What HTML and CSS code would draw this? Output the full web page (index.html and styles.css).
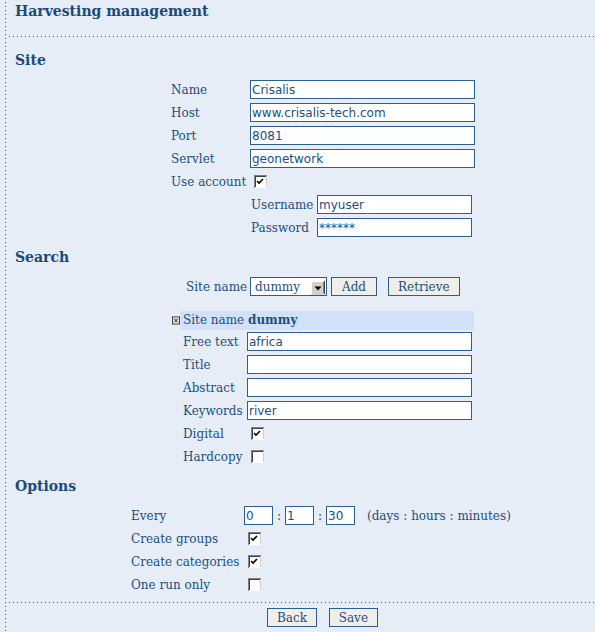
FILE: index.html
```html
<!DOCTYPE html>
<html>
<head>
<meta charset="utf-8">
<title>Harvesting management</title>
<link rel="stylesheet" href="styles.css">
</head>
<body>
<div class="page">
  <div class="title">Harvesting management</div>
  <div class="sep"></div>

  <h2 class="section">Site</h2>
  <div class="center">
    <div class="block site">
      <div class="row"><span class="lbl c80">Name</span><input class="txt w225" type="text" value="Crisalis"></div>
      <div class="row"><span class="lbl c80">Host</span><input class="txt w225" type="text" value="www.crisalis-tech.com"></div>
      <div class="row"><span class="lbl c80">Port</span><input class="txt w225" type="text" value="8081"></div>
      <div class="row"><span class="lbl c80">Servlet</span><input class="txt w225" type="text" value="geonetwork"></div>
      <div class="row"><span class="lbl c80">Use account</span>
        <span class="cb"><svg width="13" height="13" viewBox="0 0 13 13"><rect width="13" height="13" fill="#fff"/><path d="M0 0h13v1H1v12H0z" fill="#808080"/><path d="M1 1h11v1H2v10H1z" fill="#404040"/><path d="M1 12h12V1h-1v11H1z" fill="#d4d0c8"/><rect x="2" y="2" width="9" height="9" fill="#fff"/><path d="M3 6l2 2 4-4" fill="none" stroke="#000" stroke-width="1.6"/></svg></span>
      </div>
      <div class="row"><span class="c80"></span><span class="lbl c67">Username</span><input class="txt w155" type="text" value="myuser"></div>
      <div class="row"><span class="c80"></span><span class="lbl c67">Password</span><input class="txt w155" type="text" value="******"></div>
    </div>
  </div>

  <h2 class="section">Search</h2>
  <div class="center">
    <div class="block search-bar">
      <div class="row"><span class="lbl c64">Site name</span>
        <div class="select"><span class="select-val">dummy</span><span class="drop"><svg width="14" height="14" viewBox="0 0 14 14"><rect width="14" height="14" fill="#d4d0c8"/><path d="M0 0h13v1H1v12H0z" fill="#fff"/><path d="M0 13h14V0h-1v13H0z" fill="#404040"/><path d="M1 12h12V1h-1v11H1z" fill="#808080"/><path d="M3.5 5.5h7l-3.5 4z" fill="#000"/></svg></span></div>
        <button class="btn add" type="button">Add</button>
        <button class="btn retrieve" type="button">Retrieve</button>
      </div>
    </div>
    <div class="block search-form">
      <div class="head-row"><span class="icon-col"><svg width="9" height="9" viewBox="0 0 9 9"><rect x="0.5" y="0.5" width="8" height="8" fill="#e8e8e8" stroke="#333"/><path d="M2.5 2.5l4 4M6.5 2.5l-4 4" stroke="#000" stroke-width="1"/></svg></span><span class="head">Site name <b>dummy</b></span></div>
      <div class="row"><span class="c9"></span><span class="lbl c67 pl3">Free text</span><input class="txt w225" type="text" value="africa"></div>
      <div class="row"><span class="c9"></span><span class="lbl c67 pl3">Title</span><input class="txt w225" type="text" value=""></div>
      <div class="row"><span class="c9"></span><span class="lbl c67 pl3">Abstract</span><input class="txt w225" type="text" value=""></div>
      <div class="row"><span class="c9"></span><span class="lbl c67 pl3">Keywords</span><input class="txt w225" type="text" value="river"></div>
      <div class="row"><span class="c9"></span><span class="lbl c67 pl3">Digital</span>
        <span class="cb"><svg width="13" height="13" viewBox="0 0 13 13"><rect width="13" height="13" fill="#fff"/><path d="M0 0h13v1H1v12H0z" fill="#808080"/><path d="M1 1h11v1H2v10H1z" fill="#404040"/><path d="M1 12h12V1h-1v11H1z" fill="#d4d0c8"/><rect x="2" y="2" width="9" height="9" fill="#fff"/><path d="M3 6l2 2 4-4" fill="none" stroke="#000" stroke-width="1.6"/></svg></span>
      </div>
      <div class="row"><span class="c9"></span><span class="lbl c67 pl3">Hardcopy</span>
        <span class="cb"><svg width="13" height="13" viewBox="0 0 13 13"><rect width="13" height="13" fill="#fff"/><path d="M0 0h13v1H1v12H0z" fill="#808080"/><path d="M1 1h11v1H2v10H1z" fill="#404040"/><path d="M1 12h12V1h-1v11H1z" fill="#d4d0c8"/><rect x="2" y="2" width="9" height="9" fill="#fff"/></svg></span>
      </div>
    </div>
  </div>

  <h2 class="section">Options</h2>
  <div class="center">
    <div class="block options">
      <div class="row"><span class="lbl c113">Every</span>
        <input class="txt w29" type="text" value="0"><span class="colon">:</span><input class="txt w29" type="text" value="1"><span class="colon">:</span><input class="txt w29" type="text" value="30"><span class="units">(days : hours : minutes)</span>
      </div>
      <div class="row"><span class="lbl c113">Create groups</span>
        <span class="cb"><svg width="13" height="13" viewBox="0 0 13 13"><rect width="13" height="13" fill="#fff"/><path d="M0 0h13v1H1v12H0z" fill="#808080"/><path d="M1 1h11v1H2v10H1z" fill="#404040"/><path d="M1 12h12V1h-1v11H1z" fill="#d4d0c8"/><rect x="2" y="2" width="9" height="9" fill="#fff"/><path d="M3 6l2 2 4-4" fill="none" stroke="#000" stroke-width="1.6"/></svg></span>
      </div>
      <div class="row"><span class="lbl c113">Create categories</span>
        <span class="cb"><svg width="13" height="13" viewBox="0 0 13 13"><rect width="13" height="13" fill="#fff"/><path d="M0 0h13v1H1v12H0z" fill="#808080"/><path d="M1 1h11v1H2v10H1z" fill="#404040"/><path d="M1 12h12V1h-1v11H1z" fill="#d4d0c8"/><rect x="2" y="2" width="9" height="9" fill="#fff"/><path d="M3 6l2 2 4-4" fill="none" stroke="#000" stroke-width="1.6"/></svg></span>
      </div>
      <div class="row"><span class="lbl c113">One run only</span>
        <span class="cb"><svg width="13" height="13" viewBox="0 0 13 13"><rect width="13" height="13" fill="#fff"/><path d="M0 0h13v1H1v12H0z" fill="#808080"/><path d="M1 1h11v1H2v10H1z" fill="#404040"/><path d="M1 12h12V1h-1v11H1z" fill="#d4d0c8"/><rect x="2" y="2" width="9" height="9" fill="#fff"/></svg></span>
      </div>
    </div>
  </div>

  <div class="sep sep-bottom"></div>
  <div class="center">
    <div class="block actions">
      <button class="btn act" type="button">Back</button>
      <button class="btn act" type="button">Save</button>
    </div>
  </div>
</div>
</body>
</html>
```

FILE: styles.css
```css
html, body {
  margin: 0;
  padding: 0;
  background: #e6edf6;
}
body {
  font-family: "DejaVu Serif", serif;
  font-size: 12px;
  color: #1d4e7e;
}
.page {
  min-height: 632px;
  background-image: linear-gradient(to bottom, #1d5a8c 0, #1d5a8c 1px, transparent 1px);
  background-size: 1px 4px;
  background-repeat: repeat-y;
  background-position: 5px 2px;
}
.title {
  height: 36px;
  box-sizing: border-box;
  padding: 1px 0 0 15px;
  font-weight: bold;
  font-size: 14px;
  line-height: 20px;
  color: #1a4a7a;
}
.sep {
  height: 1px;
  margin-left: 9px;
  background-image: linear-gradient(to right, #1d5a8c 0, #1d5a8c 1px, transparent 1px);
  background-size: 4px 1px;
  background-repeat: repeat-x;
}
.section {
  margin: 13px 0 8px 0;
  padding-left: 15px;
  font-size: 14px;
  line-height: 20px;
  font-weight: bold;
  color: #1a4a7a;
}
h2.section ~ h2.section { margin-top: 8px; }
.center {
  margin-left: 50px;
  width: 545px;
  display: flex;
  flex-direction: column;
  align-items: center;
}
.block { display: flex; flex-direction: column; }
.site { width: 305px; }
.search-bar { width: 273px; }
.search-form { width: 303px; margin-top: 13px; }
.options { width: 383px; }
.row {
  display: flex;
  align-items: center;
  height: 23px;
  white-space: nowrap;
}
.lbl {
  box-sizing: border-box;
  height: 23px;
  padding-top: 2px;
  line-height: 21px;
}
.c80 { width: 80px; padding-left: 1px; box-sizing: border-box; flex: none; }
.c67 { width: 67px; flex: none; box-sizing: border-box; }
.site .c67 { padding-left: 1px; }
.c64 { width: 64px; flex: none; }
.c9 { width: 9px; flex: none; }
.c113 { width: 113px; flex: none; }
.pl3 { padding-left: 3px; }
.txt {
  box-sizing: border-box;
  height: 19px;
  margin: 0;
  padding: 0 1px;
  border: 1px solid #2b5f91;
  background: #fff;
  font-family: "DejaVu Sans", sans-serif;
  font-size: 12px;
  color: #1d4e7e;
  outline: none;
}
.w225 { width: 225px; }
.w155 { width: 155px; }
.w29 { width: 29px; }
.cb {
  display: block;
  width: 13px;
  height: 13px;
  margin-left: 4px;
  flex: none;
}
.cb svg { display: block; }
.select {
  box-sizing: border-box;
  width: 77px;
  height: 19px;
  border: 1px solid #2b5f91;
  background: #fff;
  display: flex;
  align-items: center;
  justify-content: space-between;
  flex: none;
}
.select-val { padding-left: 4px; line-height: 17px; padding-top: 1px; }
.drop { display: block; width: 14px; height: 14px; margin: 2px 1px 0 0; }
.drop svg { display: block; }
.btn {
  box-sizing: border-box;
  height: 19px;
  margin: 0;
  padding: 1px 10px 0;
  border: 1px solid #2b5f91;
  background: #efeee8;
  font-family: "DejaVu Serif", serif;
  font-size: 12px;
  line-height: 16px;
  color: #1d4e7e;
  flex: none;
}
.add { margin-left: 4px; }
.retrieve { margin-left: 11px; padding: 1px 9px 0; }
.act { padding: 1px 9px 0; }
.head-row {
  display: flex;
  align-items: center;
  height: 19px;
}
.icon-col { width: 9px; flex: none; display: flex; align-items: center; }
.icon-col svg { display: block; margin-left: 1px; }
.head {
  flex: 1;
  height: 19px;
  line-height: 19px;
  background: #d1e1fa;
  padding-left: 3px;
}
.colon { width: 12px; text-align: center; flex: none; }
.units { margin-left: 12px; }
.sep-bottom { margin-top: 6px; }
.actions {
  width: 111px;
  flex-direction: row;
  justify-content: space-between;
  margin-top: 5px;
}
```
